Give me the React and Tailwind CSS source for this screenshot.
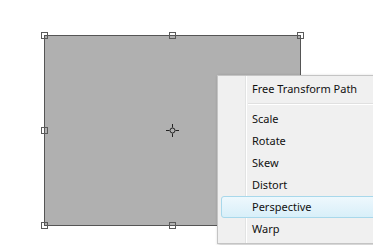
import React from 'react';

function Handle({ x, y }) {
  return (
    <div
      className="absolute w-[7px] h-[7px] border border-[#5a5a5a] bg-transparent"
      style={{ left: x - 3, top: y - 3 }}
    />
  );
}

const items = ['Scale', 'Rotate', 'Skew', 'Distort', 'Perspective', 'Warp'];

export default function App() {
  const handles = [
    [44, 35], [172, 35], [300, 35],
    [44, 130],
    [44, 225], [172, 225], [300, 225],
  ];
  return (
    <div className="relative w-[373px] h-[245px] bg-white overflow-hidden font-['Noto_Sans',sans-serif]">
      {/* shape */}
      <div className="absolute left-[44px] top-[35px] w-[257px] h-[191px] bg-[#b0b0b0] border border-[#555]" />
      {handles.map(([x, y], i) => (
        <Handle key={i} x={x} y={y} />
      ))}
      {/* crosshair */}
      <svg className="absolute left-[165px] top-[123px]" width="15" height="15" viewBox="0 0 15 15">
        <circle cx="7.5" cy="7.5" r="2.5" fill="none" stroke="#222" strokeWidth="1" />
        <path d="M7.5 1v3.5M7.5 10.5v3.5M1 7.5h3.5M10.5 7.5h3.5" stroke="#222" strokeWidth="1" />
      </svg>

      {/* context menu */}
      <div className="absolute left-[217px] top-[75px] w-[170px] h-[169px] bg-[#f0f0f0] border border-[#c4c4c4] shadow-[1px_1px_3px_rgba(0,0,0,0.25)] pt-[2px]">
        <div className="absolute left-[27px] top-0 bottom-0 w-[2px] border-l border-r border-l-[#e2e3e3] border-r-white" />
        <div className="relative flex flex-col text-[11px] text-[#111]">
          <div className="h-[22px] flex items-center pl-[34px]">Free Transform Path</div>
          <div className="h-[8px] flex items-center pl-[30px]">
            <div className="w-full border-t border-b border-t-[#e0e0e0] border-b-white" />
          </div>
          {items.map((t) => (
            <div key={t} className="h-[22px] flex items-center relative">
              {t === 'Perspective' && (
                <div className="absolute left-[3px] -right-2 top-0 bottom-0 rounded-[3px] border border-[#a8d8eb] bg-gradient-to-b from-[#eef8fd] to-[#d8eff9]" />
              )}
              <span className="relative pl-[34px]">{t}</span>
            </div>
          ))}
        </div>
      </div>
    </div>
  );
}
